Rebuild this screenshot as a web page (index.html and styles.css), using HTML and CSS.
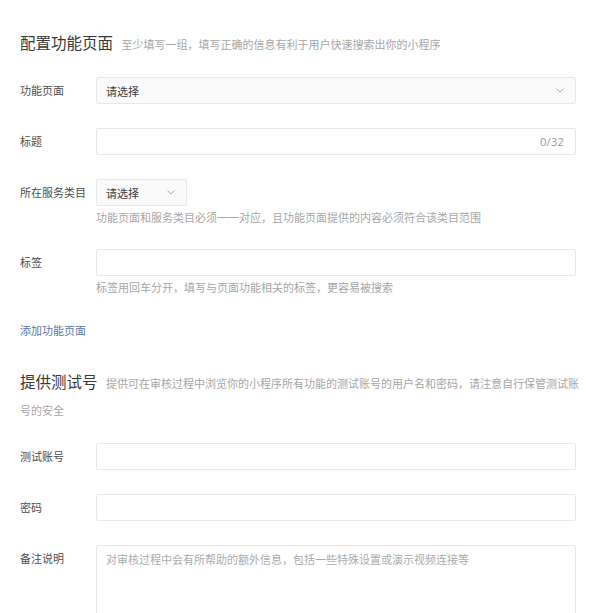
FILE: index.html
```html
<!DOCTYPE html>
<html lang="zh-CN">
<head>
<meta charset="utf-8">
<title>配置功能页面</title>
<link rel="stylesheet" href="styles.css">
</head>
<body>
<div class="page">
  <div class="sec-head"><span class="sec-title">配置功能页面</span><span class="sec-desc">至少填写一组，填写正确的信息有利于用户快速搜索出你的小程序</span></div>

  <div class="row">
    <div class="lbl">功能页面</div>
    <div class="field">
      <div class="select select-full">
        <span>请选择</span>
        <svg class="chev" width="8" height="5" viewBox="0 0 8 5"><polyline points="0.5,0.5 4,4 7.5,0.5" fill="none" stroke="#a8a8a8" stroke-width="1"/></svg>
      </div>
    </div>
  </div>

  <div class="row">
    <div class="lbl">标题</div>
    <div class="field">
      <div class="input"><span class="counter">0/32</span></div>
    </div>
  </div>

  <div class="row">
    <div class="lbl">所在服务类目</div>
    <div class="field">
      <div class="select select-small">
        <span>请选择</span>
        <svg class="chev" width="8" height="5" viewBox="0 0 8 5"><polyline points="0.5,0.5 4,4 7.5,0.5" fill="none" stroke="#a8a8a8" stroke-width="1"/></svg>
      </div>
      <div class="help">功能页面和服务类目必须一一对应，且功能页面提供的内容必须符合该类目范围</div>
    </div>
  </div>

  <div class="row">
    <div class="lbl">标签</div>
    <div class="field">
      <div class="input"></div>
      <div class="help">标签用回车分开，填写与页面功能相关的标签，更容易被搜索</div>
    </div>
  </div>

  <div class="add-link">添加功能页面</div>

  <div class="sec-head sec-head-2">
    <div class="sec-line"><span class="sec-title">提供测试号</span><span class="sec-desc">提供可在审核过程中浏览你的小程序所有功能的测试账号的用户名和密码，请注意自行保管测试账</span></div>
    <div class="sec-desc sec-desc-cont">号的安全</div>
  </div>

  <div class="row">
    <div class="lbl">测试账号</div>
    <div class="field"><div class="input"></div></div>
  </div>

  <div class="row">
    <div class="lbl">密码</div>
    <div class="field"><div class="input"></div></div>
  </div>

  <div class="row">
    <div class="lbl">备注说明</div>
    <div class="field">
      <div class="textarea"><span class="placeholder">对审核过程中会有所帮助的额外信息，包括一些特殊设置或演示视频连接等</span></div>
    </div>
  </div>
</div>
</body>
</html>
```

FILE: styles.css
```css
html, body {
  margin: 0;
  padding: 0;
  background: #ffffff;
}

body {
  font-family: "Noto Sans CJK SC", "Noto Sans", "Liberation Sans", sans-serif;
  font-size: 11px;
  color: #4d4d4d;
}

.page {
  padding: 31px 24px 0 20px;
}

.sec-head {
  line-height: 27px;
  margin-right: -8px;
  margin-bottom: 19px;
  font-size: 11px;
}

.sec-head-2 {
  margin-top: 32px;
}

.sec-line {
  white-space: nowrap;
}

.sec-title {
  font-size: 15.5px;
  line-height: 1;
  color: #383838;
  margin-right: 8.5px;
}

.sec-desc {
  color: #a6a6a6;
}

.row {
  display: flex;
  align-items: flex-start;
}

.row + .row {
  margin-top: 24px;
}

.lbl {
  width: 76px;
  flex: none;
  line-height: 26px;
  color: #4d4d4d;
  font-size: 11px;
}

.field {
  flex: 1;
  min-width: 0;
}

.select,
.input,
.textarea {
  box-sizing: border-box;
  border: 1px solid #e8e8e8;
  border-radius: 2px;
  background: #ffffff;
}

.select {
  height: 27px;
  display: flex;
  align-items: center;
  justify-content: space-between;
  padding: 0 11px 0 9px;
  background: #fafafa;
  color: #3d3d3d;
  font-size: 11px;
}

.select-small {
  width: 91px;
}

.chev {
  display: block;
}

.input {
  height: 27px;
  display: flex;
  align-items: center;
  justify-content: flex-end;
  padding: 0 11px;
}

.counter {
  font-family: "Open Sans", "Liberation Sans", sans-serif;
  font-size: 11.5px;
  color: #9a9a9a;
}

.help {
  margin-top: 3px;
  line-height: 16px;
  font-size: 11px;
  color: #a6a6a6;
}

.add-link {
  margin-top: 27px;
  line-height: 16px;
  font-size: 11px;
  color: #5a76a6;
}

.textarea {
  height: 100px;
  padding: 5px 9px;
}

.placeholder {
  line-height: 16px;
  color: #ababab;
  font-size: 11px;
}
```
